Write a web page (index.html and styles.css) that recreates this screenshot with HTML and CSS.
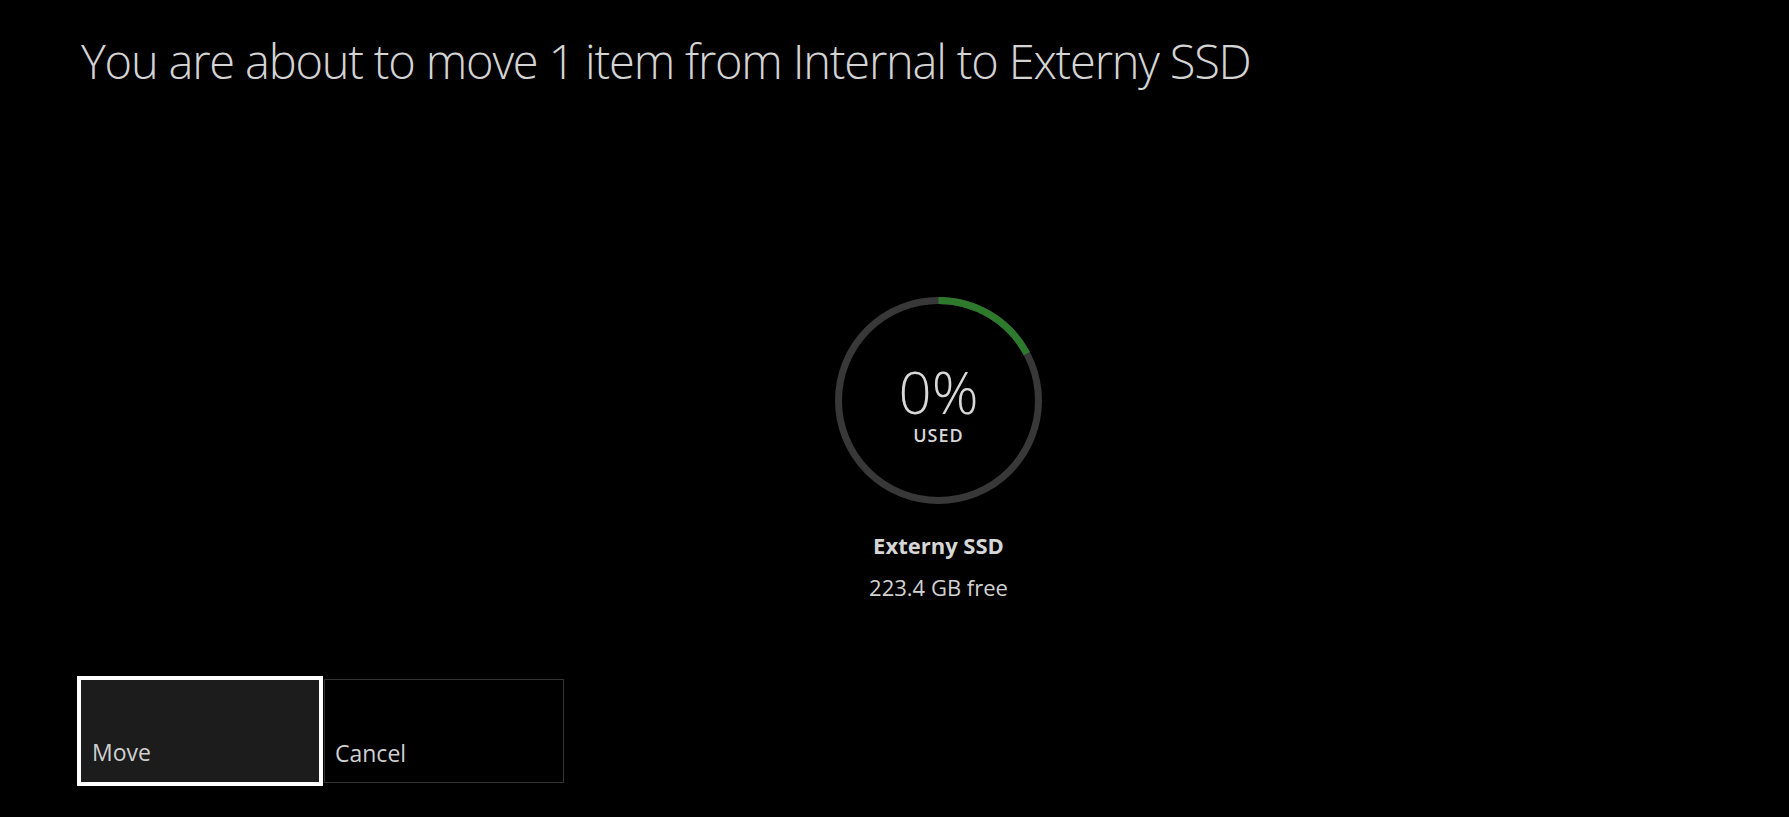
FILE: index.html
```html
<!DOCTYPE html>
<html lang="en">
<head>
<meta charset="utf-8">
<title>Move items</title>
<link rel="stylesheet" href="styles.css">
</head>
<body>
<div class="screen">
  <h1 class="title">You are about to move 1 item from Internal to Externy SSD</h1>
  <main class="storage">
    <div class="gauge">
      <svg class="ring" width="207" height="207" viewBox="0 0 207 207">
        <circle cx="103.5" cy="103.5" r="100" fill="none" stroke="#383838" stroke-width="7"/>
        <circle cx="103.5" cy="103.5" r="100" fill="none" stroke="#2d7a2d" stroke-width="7"
          stroke-dasharray="108 600" transform="rotate(-90 103.5 103.5)"/>
      </svg>
      <div class="gauge-label">
        <div class="percent">0%</div>
        <div class="used">USED</div>
      </div>
    </div>
    <div class="drive-name">Externy SSD</div>
    <div class="drive-free">223.4 GB free</div>
  </main>
  <div class="actions">
    <button class="btn btn-focus">Move</button>
    <button class="btn">Cancel</button>
  </div>
</div>
</body>
</html>
```

FILE: styles.css
```css
html, body {
  margin: 0;
  padding: 0;
  background: #000;
}
body {
  font-family: "Open Sans", "Noto Sans", "Liberation Sans", sans-serif;
  color: #d2d2d2;
}
.screen {
  width: 1789px;
  height: 817px;
  display: flex;
  flex-direction: column;
  box-sizing: border-box;
  padding: 33px 0 0 78px;
  overflow: hidden;
}
.title {
  margin: 0 0 0 3px;
  font-size: 47px;
  font-weight: 300;
  line-height: 56px;
  letter-spacing: -1.2px;
  color: #d4d4d4;
  white-space: nowrap;
}
.storage {
  display: flex;
  flex-direction: column;
  align-items: center;
  padding-left: 10px;
  margin-top: 208px;
}
.gauge {
  display: grid;
  width: 207px;
  height: 207px;
}
.ring, .gauge-label {
  grid-area: 1 / 1;
}
.gauge-label {
  display: flex;
  flex-direction: column;
  align-items: center;
  justify-content: center;
  padding-top: 10px;
}
.percent {
  font-size: 58px;
  font-weight: 300;
  line-height: 52px;
  margin-bottom: 6px;
  color: #d8d8d8;
}
.used {
  font-size: 18px;
  font-weight: 600;
  letter-spacing: 1px;
  line-height: 22px;
  color: #d8d8d8;
}
.drive-name {
  margin-top: 26px;
  font-size: 22px;
  font-weight: 700;
  line-height: 30px;
  color: #d6d6d6;
}
.drive-free {
  margin-top: 12px;
  font-size: 22px;
  font-weight: 400;
  line-height: 30px;
  color: #d2d2d2;
}
.actions {
  display: flex;
  align-items: center;
  gap: 1px;
  margin-top: 74px;
  margin-left: -1px;
}
.btn {
  font-family: inherit;
  font-size: 23px;
  color: #cfcfcf;
  background: #000;
  border: 1px solid #333;
  width: 240px;
  height: 104px;
  padding: 0 10px 13px;
  text-align: left;
  display: flex;
  align-items: flex-end;
  box-sizing: border-box;
}
.btn-focus {
  width: 246px;
  height: 110px;
  border: 4px solid #fff;
  background: #1c1c1c;
  padding: 0 11px 14px;
}
```
